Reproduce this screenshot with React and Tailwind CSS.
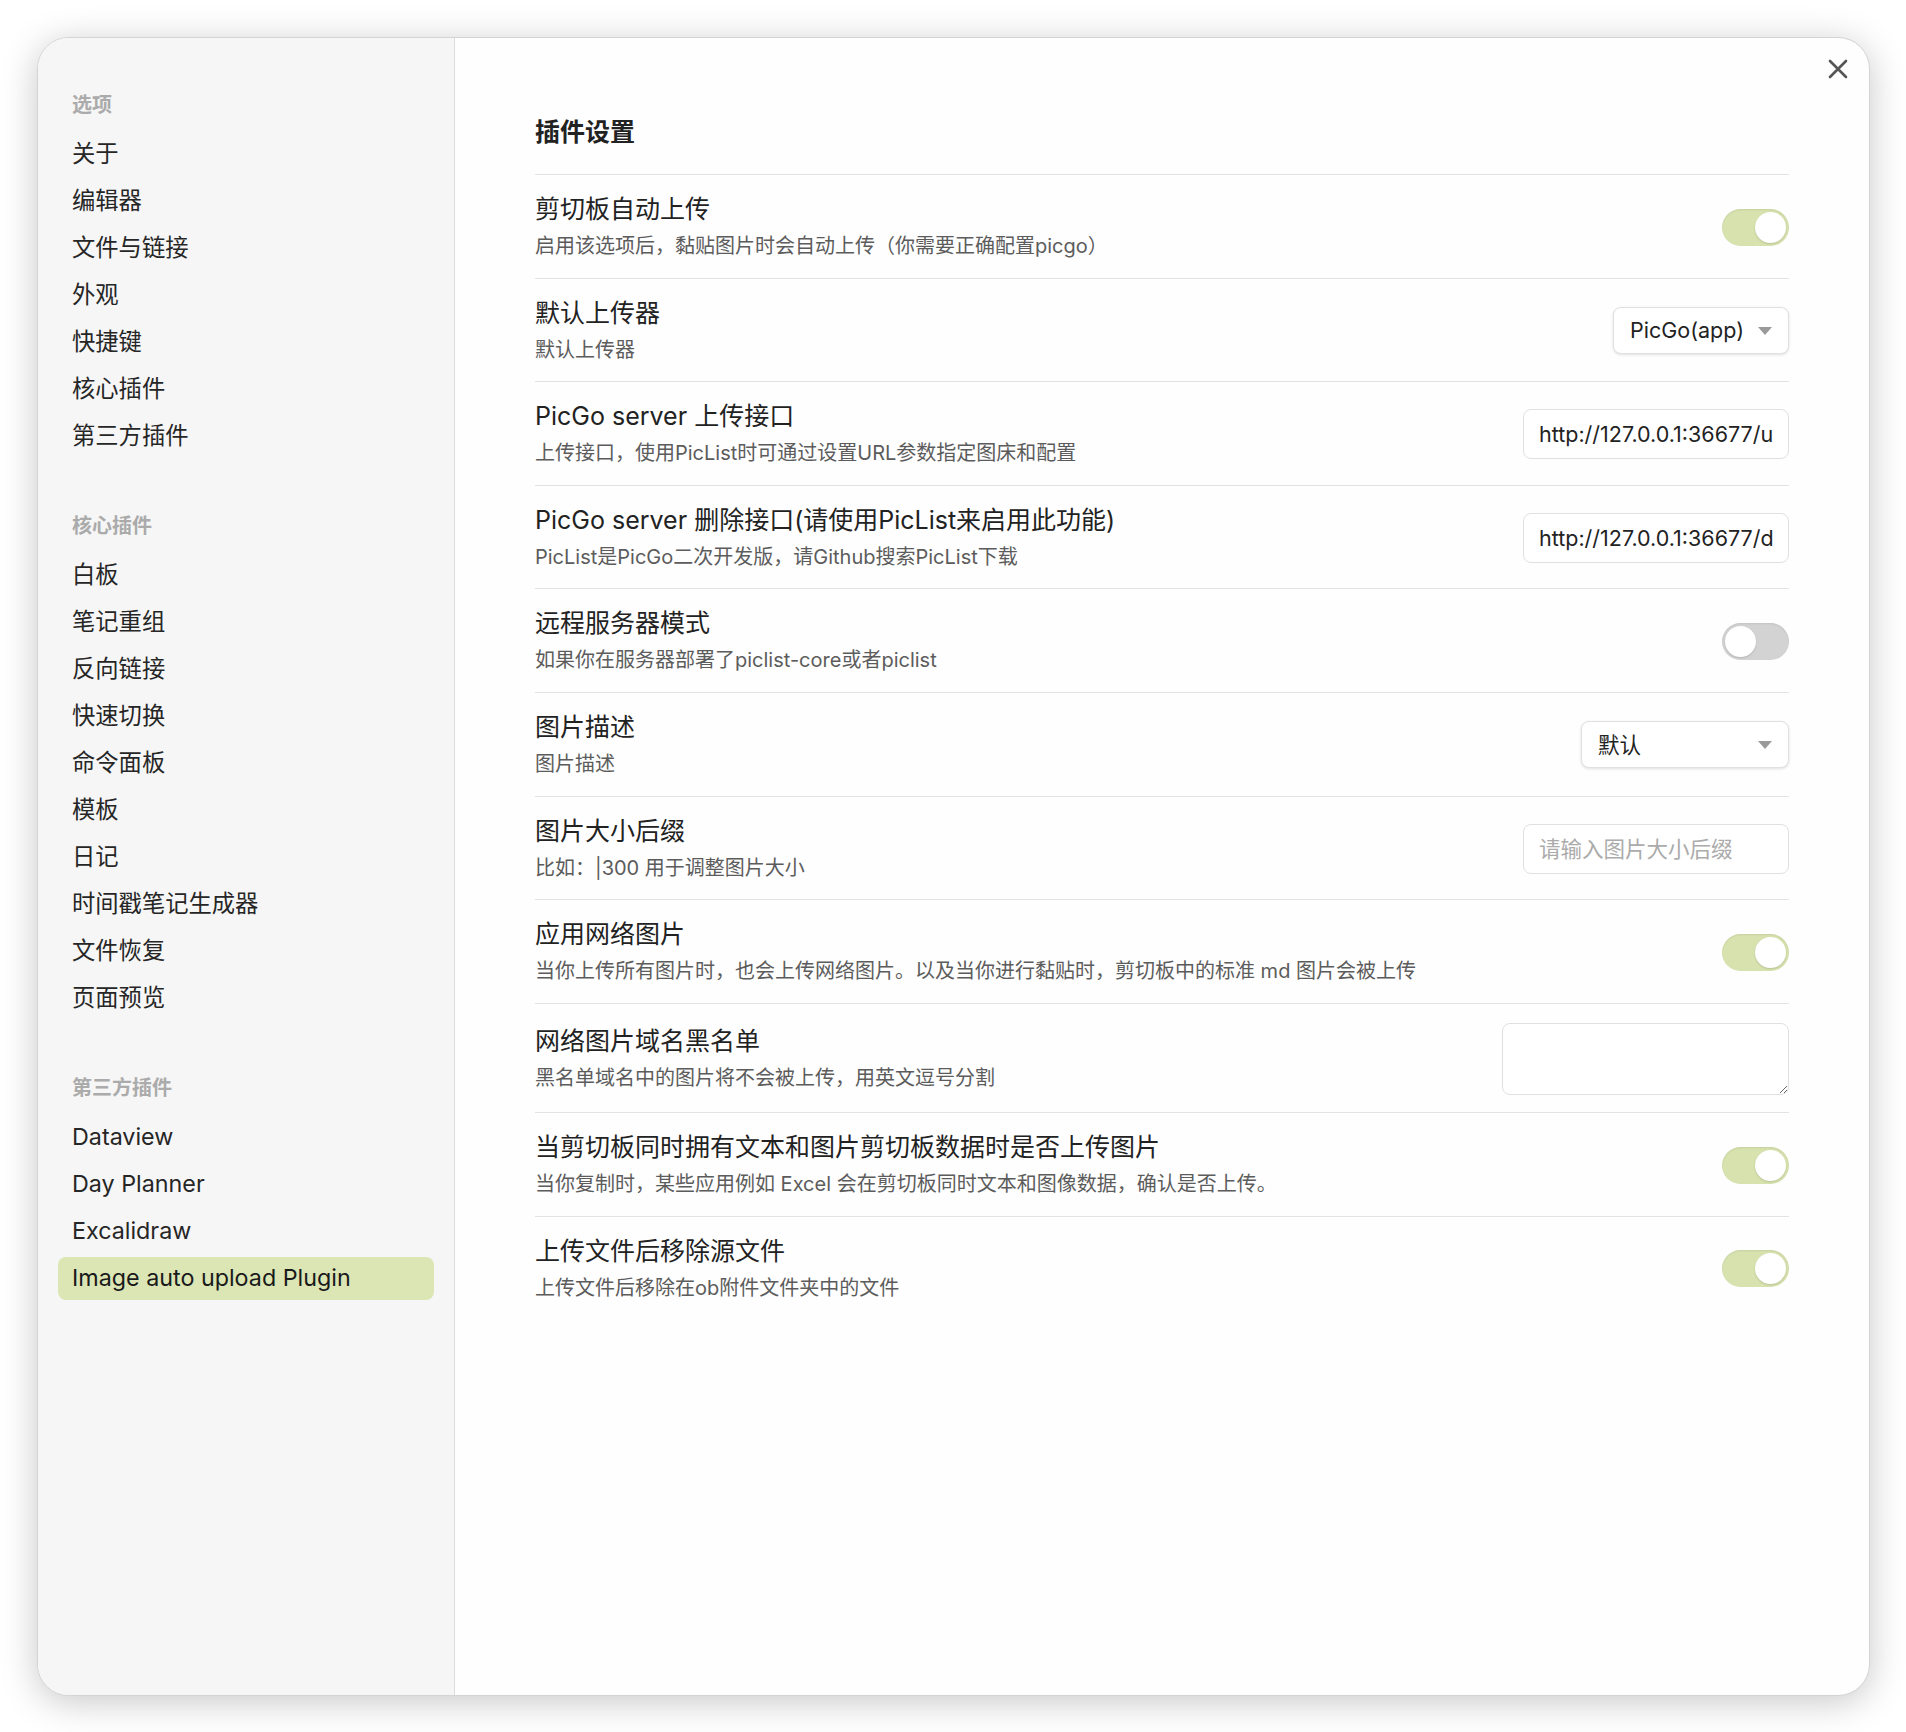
import React from 'react';

const groups = [
  { title: '选项', items: ['关于', '编辑器', '文件与链接', '外观', '快捷键', '核心插件', '第三方插件'] },
  {
    title: '核心插件',
    items: ['白板', '笔记重组', '反向链接', '快速切换', '命令面板', '模板', '日记', '时间戳笔记生成器', '文件恢复', '页面预览'],
  },
  { title: '第三方插件', items: ['Dataview', 'Day Planner', 'Excalidraw', 'Image auto upload Plugin'] },
];

const settings = [
  { name: '剪切板自动上传', desc: '启用该选项后，黏贴图片时会自动上传（你需要正确配置picgo）', control: { type: 'toggle', on: true } },
  { name: '默认上传器', desc: '默认上传器', control: { type: 'select', value: 'PicGo(app)', width: 'w-[176px]' } },
  { name: 'PicGo server 上传接口', desc: '上传接口，使用PicList时可通过设置URL参数指定图床和配置', control: { type: 'input', value: 'http://127.0.0.1:36677/upload' } },
  { name: 'PicGo server 删除接口(请使用PicList来启用此功能)', desc: 'PicList是PicGo二次开发版，请Github搜索PicList下载', control: { type: 'input', value: 'http://127.0.0.1:36677/delete' } },
  { name: '远程服务器模式', desc: '如果你在服务器部署了piclist-core或者piclist', control: { type: 'toggle', on: false } },
  { name: '图片描述', desc: '图片描述', control: { type: 'select', value: '默认', width: 'w-[208px]' } },
  { name: '图片大小后缀', desc: '比如：|300 用于调整图片大小', control: { type: 'input', value: '', placeholder: '请输入图片大小后缀' } },
  { name: '应用网络图片', desc: '当你上传所有图片时，也会上传网络图片。以及当你进行黏贴时，剪切板中的标准 md 图片会被上传', control: { type: 'toggle', on: true } },
  { name: '网络图片域名黑名单', desc: '黑名单域名中的图片将不会被上传，用英文逗号分割', control: { type: 'textarea' } },
  { name: '当剪切板同时拥有文本和图片剪切板数据时是否上传图片', desc: '当你复制时，某些应用例如 Excel 会在剪切板同时文本和图像数据，确认是否上传。', control: { type: 'toggle', on: true } },
  { name: '上传文件后移除源文件', desc: '上传文件后移除在ob附件文件夹中的文件', control: { type: 'toggle', on: true } },
];

function Toggle({ on }) {
  return (
    <div
      className={`flex h-[37px] w-[67px] items-center rounded-full px-[3px] shadow-[inset_0_1px_2px_rgba(0,0,0,0.08)] ${
        on ? 'justify-end bg-[#d7e2ae]' : 'justify-start bg-[#d3d3d3]'
      }`}
    >
      <div className="h-[31px] w-[31px] rounded-full bg-white shadow-[0_1px_2px_rgba(0,0,0,0.15)]" />
    </div>
  );
}

function Control({ c }) {
  if (c.type === 'toggle') return <Toggle on={c.on} />;
  if (c.type === 'select') {
    return (
      <div className={`flex h-[47px] ${c.width} items-center justify-between rounded-[8px] border border-[#e0e0e0] bg-white pl-[16px] pr-[16px] text-[21.5px] text-[#222] shadow-[0_1px_3px_rgba(0,0,0,0.12)]`}>
        <span>{c.value}</span>
        <svg width="14" height="8" viewBox="0 0 14 8">
          <path d="M0 0 L14 0 L7 8 Z" fill="#9a9a9a" />
        </svg>
      </div>
    );
  }
  if (c.type === 'input') {
    return (
      <input
        readOnly
        value={c.value}
        placeholder={c.placeholder}
        className="block h-[50px] w-[266px] rounded-[8px] border border-[#e0e0e0] bg-white px-[15px] text-[21.5px] text-[#222] outline-none placeholder:text-[#ababab]"
      />
    );
  }
  return (
    <textarea
      readOnly
      className="block h-[72px] w-[287px] rounded-[8px] border border-[#e0e0e0] bg-white px-[15px] py-[8px] text-[21.5px] outline-none"
    />
  );
}

export default function App() {
  return (
    <div className="min-h-[1732px] w-full bg-white pb-[36px] pl-[37px] pr-[36px] pt-[37px] font-['Inter','Noto_Sans_CJK_SC',sans-serif]">
      <div className="relative flex h-[1659px] overflow-hidden rounded-[32px] border border-[#d4d4d4] bg-[#fefefe] shadow-[0_6px_36px_rgba(0,0,0,0.22)]">
        {/* sidebar */}
        <aside className="w-[417px] shrink-0 border-r border-[#dcdcdc] bg-[#f6f6f6] px-[20px] pt-[54px]">
          {groups.map((g, gi) => (
            <div key={g.title} className={gi > 0 ? 'mt-[55px]' : ''}>
              <div className="mb-[15px] px-[14px] text-[20px] font-bold leading-[26px] text-[#ababab]">{g.title}</div>
              <div className="flex flex-col gap-[4px]">
                {g.items.map((item) => (
                  <div
                    key={item}
                    className={`flex h-[43px] items-center rounded-[8px] px-[14px] text-[23.3px] ${
                      item === 'Image auto upload Plugin' ? 'bg-[#dce6b5] text-[#1a1a1a]' : 'text-[#262626]'
                    }`}
                  >
                    {item}
                  </div>
                ))}
              </div>
            </div>
          ))}
        </aside>

        {/* content */}
        <main className="flex-1 px-[80px] pt-[78px]">
          <h3 className="mb-[26px] text-[25px] font-bold leading-[32px] text-[#222]">插件设置</h3>
          {settings.map((s, i) => (
            <div key={i} className="flex items-center justify-between gap-[24px] border-t border-[#e3e3e3] pb-[17.6px] pt-[19px]">
              <div className="min-w-0">
                <div className="text-[25px] leading-[30px] text-[#222]">{s.name}</div>
                <div className="mt-[8px] text-[20px] leading-[28px] text-[#5c5c5c]">{s.desc}</div>
              </div>
              <div className="shrink-0">
                <Control c={s.control} />
              </div>
            </div>
          ))}
        </main>

        {/* close button */}
        <button className="absolute right-[21px] top-[21px] flex h-[20px] w-[20px] items-center justify-center text-[#555]">
          <svg width="20" height="20" viewBox="0 0 20 20">
            <path d="M2 2 L18 18 M18 2 L2 18" stroke="currentColor" strokeWidth="2.6" strokeLinecap="round" />
          </svg>
        </button>
      </div>
    </div>
  );
}
